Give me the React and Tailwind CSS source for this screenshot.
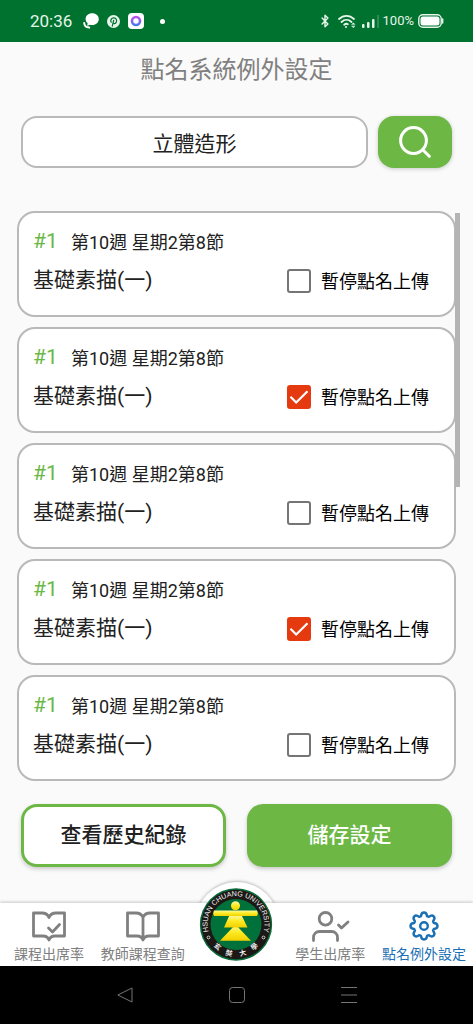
import React, { useState } from 'react';
import { Bluetooth } from 'lucide-react';

const initialLessons = [
  { id: 1, no: '#1', time: '第10週 星期2第8節', course: '基礎素描(一)', paused: false },
  { id: 2, no: '#1', time: '第10週 星期2第8節', course: '基礎素描(一)', paused: true },
  { id: 3, no: '#1', time: '第10週 星期2第8節', course: '基礎素描(一)', paused: false },
  { id: 4, no: '#1', time: '第10週 星期2第8節', course: '基礎素描(一)', paused: true },
  { id: 5, no: '#1', time: '第10週 星期2第8節', course: '基礎素描(一)', paused: false },
];

const StatusBar = () => (
  <div className="flex h-[42px] items-center justify-between bg-[#00722f] pl-[30px] pr-[29px] text-[#e6f5ea]">
    <div className="flex items-center">
      <span className="w-[53px] text-[17px] leading-5">20:36</span>
      <svg className="h-4 w-4" viewBox="0 0 16 16" fill="#fff">
        <path d="M9.200 0.200c3.900 0 6.600 2.500 6.600 5.900s-2.700 6-6.600 6c-1 0-1.700-.1-2.500-.4L4.200 13l.4-2.900C3.200 9.100 2.600 7.800 2.600 6.100c0-3.400 2.700-5.900 6.600-5.900z" />
        <path d="M1.200 10c.2 2.800 2 4.400 5 4.600" fill="none" stroke="#fff" strokeWidth="2" strokeLinecap="round" />
      </svg>
      <svg className="ml-2 h-[13px] w-[13px]" viewBox="0 0 24 24">
        <circle cx="12" cy="12" r="12" fill="#e6f5ea" />
        <path d="M9.800 20.500l2.500-10.500M7.800 13.200C5.500 9.500 8 5.500 12.300 5.500c3.700 0 5.700 2.400 5.400 5.600-.3 3.200-2.200 5-4.300 4.800-1.200-.1-1.900-.7-2-1.600" fill="none" stroke="#00722f" strokeWidth="2.300" strokeLinecap="round" />
      </svg>
      <svg className="ml-2 h-4 w-4" viewBox="0 0 16 16">
        <defs>
          <linearGradient id="ring" x1="0" y1="0" x2="0" y2="1">
            <stop offset="0" stopColor="#c050e8" />
            <stop offset="1" stopColor="#4a7cf0" />
          </linearGradient>
        </defs>
        <rect width="16" height="16" rx="4" fill="#fff" />
        <circle cx="8" cy="8" r="4" fill="none" stroke="url(#ring)" strokeWidth="2.600" />
      </svg>
      <span className="ml-4 h-[5px] w-[5px] rounded-full bg-white" />
    </div>
    <div className="flex items-center">
      <Bluetooth className="h-[14px] w-[14px]" strokeWidth={2.5} />
      <svg className="ml-[6px] h-[15px] w-[18px]" viewBox="0 0 18 15" fill="none" stroke="currentColor" strokeWidth="1.800" strokeLinecap="round">
        <path d="M1 5c4.500-4.300 10.500-4.300 15 0M3.500 8c3-2.800 7-2.800 10 0M6.200 10.700c1.500-1.200 2.600-1.200 3.600-.4" />
        <circle cx="8" cy="13" r="1" fill="currentColor" stroke="none" />
        <path d="M13.800 10.300l1.500-1.500 1.500 1.500zM13.800 12.300l1.500 1.500 1.500-1.500z" fill="currentColor" strokeWidth=".5" />
      </svg>
      <svg className="ml-[6px] h-[14px] w-[17px]" viewBox="0 0 17 14" fill="currentColor">
        <rect x="0" y="10" width="2.500" height="4" rx="1" />
        <rect x="5" y="8" width="2.500" height="6" rx="1" />
        <rect x="10" y="5" width="2.500" height="9" rx="1" />
        <rect x="15" y="1" width="2" height="13" opacity=".2" />
      </svg>
      <span className="ml-1 text-[13px] leading-4">100%</span>
      <svg className="ml-1 h-[14px] w-[26px]" viewBox="0 0 26 14">
        <rect x=".8" y=".8" width="22.400" height="12.400" rx="4" fill="none" stroke="#e6f5ea" strokeWidth="1.400" />
        <rect x="2.500" y="2.500" width="19" height="9" rx="2.500" fill="#fff" />
        <path d="M24.600 5v4" stroke="#e6f5ea" strokeWidth="1.600" strokeLinecap="round" />
      </svg>
    </div>
  </div>
);

const LessonCard = ({ lesson, onToggle }) => (
  <li className="flex h-[106px] flex-col rounded-[18px] border-2 border-[#b9b9b9] bg-white pl-[14px] pr-[25px] pt-[15px]">
    <div className="flex h-7 items-center">
      <span className="w-[38px] text-[21px] text-[#6ab845]">{lesson.no}</span>
      <span className="text-[18px]">{lesson.time}</span>
    </div>
    <div className="mt-[11px] flex h-7 items-center justify-between">
      <span className="text-[21px]">{lesson.course}</span>
      <label className="flex items-center gap-[10px] text-[18px] text-black">
        <span className="grid h-6 w-6">
          <input
            type="checkbox"
            checked={lesson.paused}
            onChange={() => onToggle(lesson.id)}
            className="col-start-1 row-start-1 h-6 w-6 appearance-none rounded-[3px] border-2 border-[#757575] bg-white checked:border-[#e53910] checked:bg-[#e53910]"
          />
          {lesson.paused && (
            <svg className="pointer-events-none col-start-1 row-start-1 h-6 w-6" viewBox="0 0 24 24" fill="none" stroke="#fff" strokeWidth="2.200">
              <path d="M3.500 11.800l5.700 5.700L20.500 6.200" />
            </svg>
          )}
        </span>
        暫停點名上傳
      </label>
    </div>
  </li>
);

const SchoolLogo = () => (
  <svg className="h-[73px] w-[73px]" viewBox="0 0 73 73">
    <defs>
      <linearGradient id="gold" x1="0" y1="0" x2="0" y2="1">
        <stop offset="0" stopColor="#fff9a0" />
        <stop offset=".5" stopColor="#fdea20" />
        <stop offset="1" stopColor="#f2cf00" />
      </linearGradient>
      <path id="topArc" d="M10.500 48 A28.400 28.400 0 1 1 62.500 48" />
    </defs>
    <circle cx="36.500" cy="36.500" r="36.200" fill="#0b6b3a" />
    <circle cx="36.500" cy="36.500" r="34.700" fill="#1c1815" />
    <circle cx="36.500" cy="36.500" r="25.500" fill="#00713a" />
    <path d="M36 36.500L51.500 52.700H20.500z" fill="url(#gold)" />
    <path d="M30 27h12L48 39.500H24.500z" fill="url(#gold)" />
    <path d="M14.500 22.500h43q1.500 2.800 0 5.600h-43q-1.500-2.800 0-5.600z" fill="url(#gold)" />
    <circle cx="36" cy="17.800" r="4.500" fill="url(#gold)" />
    <text fill="#f5f5f5" fontSize="7.200" fontFamily="Liberation Sans, sans-serif">
      <textPath href="#topArc" startOffset="50%" textAnchor="middle">HSUAN CHUANG UNIVERSITY</textPath>
    </text>
    <g fill="none" stroke="#e0e0e0" strokeWidth=".9">
      <circle cx="9" cy="49.500" r="1.400" />
      <circle cx="64" cy="49.500" r="1.400" />
    </g>
    <g fill="#f2f2f2" fontSize="7" fontWeight="700" textAnchor="middle">
      <text transform="translate(16.500 60.500) rotate(40)">玄</text>
      <text transform="translate(29 67.500) rotate(14)">奘</text>
      <text transform="translate(44 67.500) rotate(-14)">大</text>
      <text transform="translate(56.500 60.500) rotate(-40)">學</text>
    </g>
  </svg>
);

const navIcon = 'h-8 w-10';

const NavItem = ({ label, active, children }) => (
  <a
    href="#"
    className={`flex flex-col items-center whitespace-nowrap pt-[7px] ${active ? 'text-[#1a70b4]' : 'text-[#808080]'}`}
  >
    {children}
    <span className="mt-[2px] text-[14px] leading-5">{label}</span>
  </a>
);

const BottomNav = () => (
  <nav className="grid h-[63px] grid-cols-5 bg-white px-[2px] shadow-[0_-1px_3px_rgba(0,0,0,0.2)]">
    <NavItem label="課程出席率">
      <svg className={navIcon} viewBox="0 0 40 32" fill="none" stroke="currentColor" strokeWidth="2.800" strokeLinecap="round" strokeLinejoin="round">
        <path d="M20 7.500C18.800 4.500 16.500 3 13 3H4.500v23H14c3 0 5 1 6 4 1-3 3-4 6-4h9.500V3H27c-3.500 0-5.800 1.500-7 4.500z" />
        <path d="M19.500 18l4 4 7-7.500" />
      </svg>
    </NavItem>
    <NavItem label="教師課程查詢">
      <svg className={navIcon} viewBox="0 0 40 32" fill="none" stroke="currentColor" strokeWidth="2.800" strokeLinecap="round" strokeLinejoin="round">
        <path d="M20 7.500C18.800 4.500 16.500 3 13 3H4.500v23H14c3 0 5 1 6 4 1-3 3-4 6-4h9.500V3H27c-3.500 0-5.800 1.500-7 4.500zM20 7.500V29" />
      </svg>
    </NavItem>
    <div className="relative">
      <a href="#" aria-label="玄奘大學" className="absolute -top-[15px] left-1/2 -translate-x-1/2">
        <SchoolLogo />
      </a>
    </div>
    <NavItem label="學生出席率">
      <svg className={navIcon} viewBox="0 0 40 32" fill="none" stroke="currentColor" strokeWidth="2.800" strokeLinecap="round" strokeLinejoin="round">
        <circle cx="15.500" cy="8.800" r="6.300" />
        <path d="M3.500 30.500v-3c0-3.500 2.500-6 6-6h12c3.500 0 6 2.500 6 6v3M28.500 15l3 3 6.500-6" />
      </svg>
    </NavItem>
    <NavItem label="點名例外設定" active>
      <svg className={navIcon} viewBox="0 0 40 32" fill="none" stroke="currentColor" strokeWidth="2.400" strokeLinejoin="round">
        <path d="M17 6.200Q17.200 2.500 20 2.500T23 6.200L24.800 6.900Q27.900 4.500 29.700 6.300T29.100 11.200L29.800 13Q33.500 13.200 33.500 16T29.800 19L29.100 20.800Q31.500 23.900 29.700 25.700T24.800 25.100L23 25.800Q22.800 29.500 20 29.500T17 25.800L15.200 25.100Q12.100 27.500 10.300 25.700T10.900 20.800L10.200 19Q6.500 18.800 6.500 16T10.200 13L10.900 11.200Q8.500 8.100 10.300 6.300T15.200 6.900z" />
        <circle cx="20" cy="16" r="3.800" />
      </svg>
    </NavItem>
  </nav>
);

const SystemBar = () => (
  <div className="flex h-[58px] items-center justify-center gap-24 bg-black text-[#757575]">
    <button type="button" aria-label="返回">
      <svg className="h-4 w-4" viewBox="0 0 16 16" fill="none" stroke="currentColor" strokeWidth="1" strokeLinejoin="round">
        <path d="M.8 8L15 1v14z" />
      </svg>
    </button>
    <button type="button" aria-label="主畫面">
      <svg className="h-4 w-4" viewBox="0 0 16 16" fill="none" stroke="currentColor" strokeWidth="1">
        <rect x=".5" y=".5" width="15" height="15" rx="3" />
      </svg>
    </button>
    <button type="button" aria-label="最近使用">
      <svg className="h-4 w-4" viewBox="0 0 16 16" stroke="currentColor" strokeWidth="1">
        <path d="M0 .5h16M0 8h16M0 15.500h16" />
      </svg>
    </button>
  </div>
);

export default function App() {
  const [keyword, setKeyword] = useState('立體造形');
  const [lessons, setLessons] = useState(initialLessons);

  const toggleLesson = (id) => {
    setLessons(lessons.map((l) => (l.id === id ? { ...l, paused: !l.paused } : l)));
  };

  return (
    <div className="flex min-h-screen flex-col bg-[#fafafa] font-[Roboto,'Noto_Sans_CJK_TC',sans-serif] text-[#212121]">
      <StatusBar />

      <main className="flex flex-1 flex-col">
        <h1 className="pt-3 text-center text-[24px] leading-8 text-[#808080]">點名系統例外設定</h1>

        <form className="mt-[30px] flex gap-[10px] px-[21px]" onSubmit={(e) => e.preventDefault()}>
          <input
            type="text"
            aria-label="課程名稱"
            value={keyword}
            onChange={(e) => setKeyword(e.target.value)}
            className="h-[52px] min-w-0 flex-1 rounded-2xl border-2 border-[#b9b9b9] bg-white text-center text-[21px]"
          />
          <button
            type="submit"
            aria-label="搜尋"
            className="flex h-[52px] w-[74px] items-center justify-center rounded-2xl bg-[#6db844] shadow-[0_1px_4px_rgba(0,0,0,0.2)]"
          >
            <svg className="h-8 w-8" viewBox="0 0 32 32" fill="none" stroke="#fff" strokeWidth="3" strokeLinecap="round">
              <circle cx="14.500" cy="14.500" r="12.900" />
              <path d="M24 24l6.300 6.300" />
            </svg>
          </button>
        </form>

        <div className="relative mt-[43px] px-[17px]">
          <ul className="flex flex-col gap-[10px]">
            {lessons.map((lesson) => (
              <LessonCard key={lesson.id} lesson={lesson} onToggle={toggleLesson} />
            ))}
          </ul>
          {/* scroll thumb */}
          <div className="absolute right-[13px] top-[2px] h-[274px] w-[5px] bg-[#b4b4b4]" />
        </div>

        <div className="mt-[23px] grid grid-cols-2 gap-[21px] px-[21px]">
          <button
            type="button"
            className="h-[63px] rounded-2xl border-[3px] border-[#6db844] bg-white text-[21px] font-medium shadow-[0_2px_4px_rgba(0,0,0,0.2)]"
          >
            查看歷史紀錄
          </button>
          <button
            type="button"
            className="h-[63px] rounded-2xl bg-[#6db844] text-[21px] font-medium text-white shadow-[0_2px_4px_rgba(0,0,0,0.2)]"
          >
            儲存設定
          </button>
        </div>
      </main>

      <footer className="relative">
        {/* round bump behind the school logo */}
        <div className="absolute -top-[21px] left-1/2 h-[84px] w-[84px] -translate-x-1/2 rounded-full bg-white shadow-[0_-1px_3px_rgba(0,0,0,0.25)]" />
        <div className="relative">
          <BottomNav />
        </div>
        <SystemBar />
      </footer>
    </div>
  );
}
